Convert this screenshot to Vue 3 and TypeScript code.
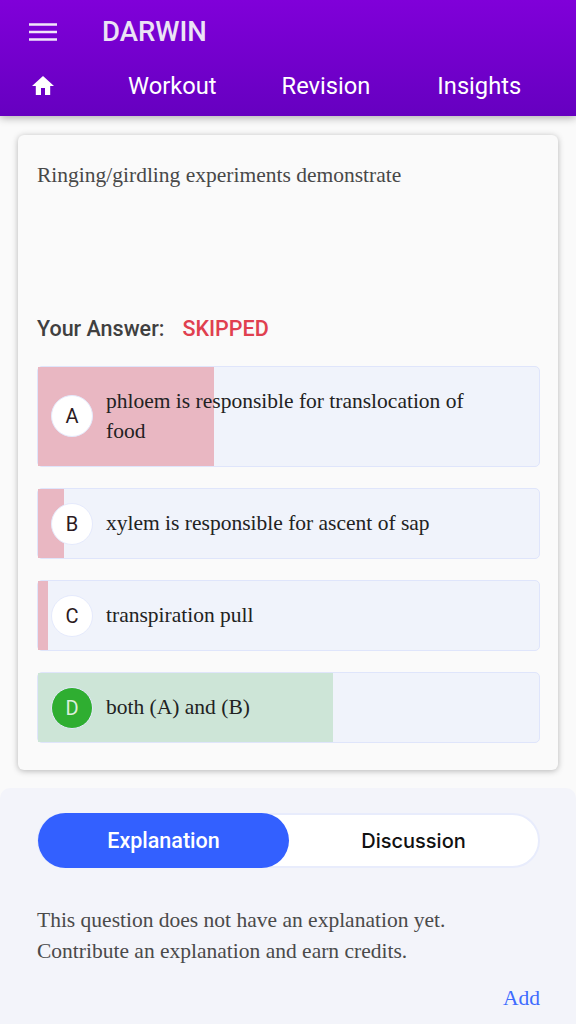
<script setup lang="ts">
interface Opt { letter: string; text: string; width: number; correct?: boolean }
const options: Opt[] = [
  { letter: 'A', text: 'phloem is responsible for translocation of food', width: 35.2 },
  { letter: 'B', text: 'xylem is responsible for ascent of sap', width: 5.2 },
  { letter: 'C', text: 'transpiration pull', width: 2 },
  { letter: 'D', text: 'both (A) and (B)', width: 58.8, correct: true },
]
</script>

<template>
  <div class="page">
    <header class="header">
      <div class="top">
        <svg class="menu" width="30" height="20" viewBox="0 0 30 20" aria-hidden="true">
          <path d="M1 2.5h28M1 10h28M1 17.500h28" stroke="#f1e6fa" stroke-width="2.600" fill="none" />
        </svg>
        <span class="brand">DARWIN</span>
      </div>
      <nav class="nav">
        <svg class="home" width="24" height="24" viewBox="0 0 24 24" aria-hidden="true">
          <path d="M10 21v-7h4v7h5.200v-9H23L12 2 1 12h3.800v9z" fill="#fff" />
        </svg>
        <span class="link l1">Workout</span>
        <span class="link l2">Revision</span>
        <span class="link l3">Insights</span>
      </nav>
    </header>

    <main class="card">
      <p class="question">Ringing/girdling experiments demonstrate</p>
      <div class="answer">
        <span class="answer-label">Your Answer:</span>
        <span class="answer-value">SKIPPED</span>
      </div>
      <div class="options">
        <div v-for="o in options" :key="o.letter" class="option">
          <div class="bar" :class="{ good: o.correct }" :style="{ width: o.width + '%' }"></div>
          <span class="badge" :class="{ good: o.correct }">{{ o.letter }}</span>
          <span class="opt-text">{{ o.text }}</span>
        </div>
      </div>
    </main>

    <section class="panel">
      <div class="tabs">
        <div class="tab active">Explanation</div>
        <div class="tab">Discussion</div>
      </div>
      <p class="explain">This question does not have an explanation yet.<br />Contribute an explanation and earn credits.</p>
      <div class="add-row"><span class="add">Add</span></div>
    </section>
  </div>
</template>

<style>
html, body { margin: 0; background: #fafafa; }
</style>

<style scoped>
.page {
  width: 576px;
  height: 1024px;
  overflow: hidden;
  background: #fafafa;
  font-family: Roboto, sans-serif;
  display: flex;
  flex-direction: column;
}
.header {
  height: 116px;
  flex: none;
  background: linear-gradient(180deg, #8000d9 0%, #6600c0 100%);
  box-shadow: 0 2px 8px rgba(0, 0, 0, 0.3);
  display: flex;
  flex-direction: column;
}
.top {
  height: 63px;
  display: flex;
  align-items: center;
  padding-left: 28px;
}
.brand {
  margin-left: 44px;
  font-size: 27.500px;
  font-weight: 500;
  color: #ece3f5;
}
.nav {
  flex: 1;
  display: flex;
  align-items: center;
  padding-left: 31px;
  padding-bottom: 8px;
}
.home { flex: none; }
.link {
  font-size: 23.700px;
  color: #fff;
}
.l1 { margin-left: 73px; }
.l2 { margin-left: 65px; }
.l3 { margin-left: 67px; }
.card {
  margin: 19px 18px 0;
  height: 635px;
  box-sizing: border-box;
  flex: none;
  background: #fafafa;
  border-radius: 6px;
  box-shadow: 0 1px 6px rgba(0, 0, 0, 0.28);
  padding: 25px 18px 0 19px;
}
.question {
  margin: 0;
  font-family: "Liberation Serif", serif;
  font-size: 21.500px;
  line-height: 31px;
  color: #484848;
}
.answer {
  margin-top: 122px;
  height: 31px;
  display: flex;
  align-items: center;
  font-size: 21.500px;
  font-weight: 500;
}
.answer-label { color: #404040; }
.answer-value { margin-left: 18px; color: #e0404f; }
.options {
  margin-top: 21.500px;
  display: flex;
  flex-direction: column;
  gap: 21px;
}
.option {
  position: relative;
  box-sizing: border-box;
  display: flex;
  align-items: center;
  padding: 0 64px 0 13px;
  background: #f0f3fb;
  border: 1px solid #dfe5fb;
  border-radius: 5px;
}
.bar {
  position: absolute;
  left: 0;
  top: 0;
  bottom: 0;
  background: #e9b7c2;
}
.bar.good { background: #cde5d7; }
.badge {
  position: relative;
  flex: none;
  box-sizing: border-box;
  width: 42px;
  height: 42px;
  border-radius: 50%;
  background: #fff;
  border: 1px solid #e5eafc;
  display: flex;
  align-items: center;
  justify-content: center;
  font-size: 20px;
  color: #2c1a22;
}
.badge.good {
  background: #2fae31;
  color: #dcefdc;
}
.opt-text {
  position: relative;
  margin-left: 13px;
  padding: 19.250px 0;
  font-family: "Liberation Serif", serif;
  font-size: 21.500px;
  line-height: 30.500px;
  color: #222;
}
.panel {
  margin-top: 18px;
  flex: 1;
  background: #f3f4fa;
  border-radius: 10px 10px 0 0;
  padding: 25px 36px 0 37px;
}
.tabs {
  height: 55px;
  box-sizing: border-box;
  display: flex;
  background: #fff;
  border: 2px solid #e8ecfc;
  border-radius: 28px;
}
.tab {
  flex: 1;
  display: flex;
  align-items: center;
  justify-content: center;
  font-size: 20px;
  font-weight: 500;
  color: #111;
  font-family: Inter, Roboto, sans-serif;
  border-radius: 28px;
  margin: -2px -1px -2px -1px;
}
.tab.active {
  background: #3360ff;
  color: #fff;
  font-family: Roboto, sans-serif;
  font-size: 21.500px;
  margin-right: 0;
}
.explain {
  margin: 37px 0 0;
  font-family: "Liberation Serif", serif;
  font-size: 21.500px;
  line-height: 31px;
  color: #4a4a4a;
}
.add-row {
  margin-top: 16px;
  display: flex;
  justify-content: flex-end;
}
.add {
  font-family: "Liberation Serif", serif;
  font-size: 21.500px;
  line-height: 31px;
  color: #3d6bff;
}
</style>
